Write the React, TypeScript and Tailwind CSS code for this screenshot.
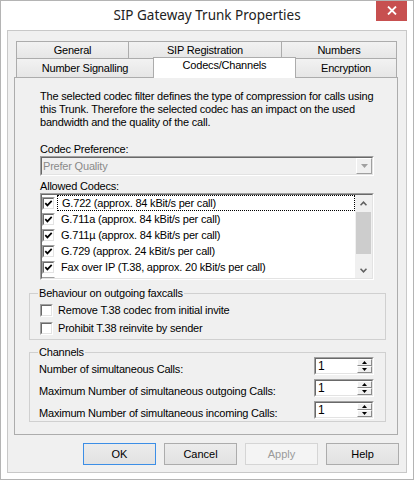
import React from "react";

// Codecs shown in the "Allowed Codecs" list (last row is cut by the list box)
const codecs = [
  "G.722 (approx. 84 kBit/s per call)",
  "G.711a (approx. 84 kBit/s per call)",
  "G.711µ (approx. 84 kBit/s per call)",
  "G.729 (approx. 24 kBit/s per call)",
  "Fax over IP (T.38, approx. 20 kBit/s per call)",
  "Forward codec information",
];

const channels = [
  "Number of simultaneous Calls:",
  "Maximum Number of simultaneous outgoing Calls:",
  "Maximum Number of simultaneous incoming Calls:",
];

const tabBase =
  "flex items-center justify-center border-[#acacac] bg-gradient-to-b from-[#f2f2f2] to-[#e6e6e6] whitespace-nowrap";

function CheckBox({ checked }: { checked?: boolean }) {
  return (
    <span className="shrink-0 w-[13px] h-[13px] border border-t-[#a0a0a0] border-l-[#a0a0a0] border-r-white border-b-white">
      <span className="flex w-full h-full items-center justify-center bg-white border border-t-[#696969] border-l-[#696969] border-r-[#e3e3e3] border-b-[#e3e3e3]">
        {checked && (
          <svg width="9" height="9" viewBox="0 0 9 9">
            <path d="M1.3 4.2 L3.4 6.4 L7.7 1.9" fill="none" stroke="#000" strokeWidth="1.7" />
          </svg>
        )}
      </span>
    </span>
  );
}

function Spinner() {
  return (
    <div className="w-[60px] h-[18px] border border-t-[#a0a0a0] border-l-[#a0a0a0] border-r-white border-b-white">
      <div className="flex h-full border border-t-[#696969] border-l-[#696969] border-r-[#e3e3e3] border-b-[#e3e3e3]">
        <div className="flex-1 bg-white pl-[2px] text-[12px] leading-[14px]">1</div>
        <div className="w-[15px] flex flex-col">
          <div className="flex-1 flex items-center justify-center bg-[#f0f0f0] border border-t-white border-l-white border-r-[#8a8a8a] border-b-[#8a8a8a]">
            <svg width="5" height="3" viewBox="0 0 5 3">
              <path d="M2.5 0 L5 3 L0 3 Z" fill="#000" />
            </svg>
          </div>
          <div className="flex-1 flex items-center justify-center bg-[#f0f0f0] border border-t-white border-l-white border-r-[#8a8a8a] border-b-[#8a8a8a]">
            <svg width="5" height="3" viewBox="0 0 5 3">
              <path d="M0 0 L5 0 L2.5 3 Z" fill="#000" />
            </svg>
          </div>
        </div>
      </div>
    </div>
  );
}

function GroupBox({ title, className, children }: { title: string; className?: string; children: React.ReactNode }) {
  return (
    <div className={`w-[357px] border border-[#d0d0d0] ${className ?? ""}`}>
      <div className="-mt-[7px] ml-[8px] w-fit px-[1px] bg-[#f0f0f0] leading-[13px]">{title}</div>
      {children}
    </div>
  );
}

export default function App() {
  return (
    <div className="relative w-[414px] h-[480px] overflow-hidden border border-[#b4b4b4] bg-white text-black text-[11px] leading-[13px] tracking-[-0.2px] font-['Liberation_Sans',Arial,sans-serif]">
      {/* Title bar */}
      <div className="h-[29px] flex items-center justify-center text-[13.5px] tracking-normal text-[#222] font-['Noto_Sans',sans-serif]">
        SIP Gateway Trunk Properties
      </div>
      <div className="absolute top-[-1px] right-[6px] w-[31px] h-[21px] bg-[#c75050] flex items-center justify-center">
        <svg width="10" height="9" viewBox="0 0 10 9">
          <path d="M1 0.5 L9 8.5 M9 0.5 L1 8.5" stroke="#fff" strokeWidth="1.8" />
        </svg>
      </div>

      {/* Client area */}
      <div className="mx-[6px] h-[443px] border border-[#c8c8c8] bg-[#f0f0f0] pt-[10px]">
        {/* Tabs */}
        <div className="ml-[8px] w-[381px]">
          <div className="flex h-[17px]">
            <div className={`${tabBase} w-[112px] border-t border-l`}>General</div>
            <div className={`${tabBase} w-[153px] border-t border-l`}>SIP Registration</div>
            <div className={`${tabBase} w-[116px] border-t border-l border-r`}>Numbers</div>
          </div>
          <div className="flex h-[19px]">
            <div className={`${tabBase} w-[137px] h-[19px] border-t border-l`}>Number Signalling</div>
            <div className="relative z-10 -mt-[1px] w-[143px] h-[21px] pb-[5px] flex items-center justify-center bg-white border-t border-l border-r border-[#acacac] whitespace-nowrap">
              Codecs/Channels
            </div>
            <div className={`${tabBase} w-[101px] h-[19px] border-t border-r`}>Encryption</div>
          </div>
        </div>

        {/* Tab page */}
        <div className="ml-[6px] w-[384px] h-[358px] border border-[#acacac] bg-[#f0f0f0] pt-[12px] pl-[14px]">
          <p className="ml-[11px] whitespace-nowrap">
            The selected codec filter defines the type of compression for calls using
            <br />
            this Trunk. Therefore the selected codec has an impact on the used
            <br />
            bandwidth and the quality of the call.
          </p>

          <div className="ml-[11px] mt-[14px]">Codec Preference:</div>
          <div className="ml-[11px] w-[334px] h-[20px] border border-t-[#a0a0a0] border-l-[#a0a0a0] border-r-white border-b-white">
            <div className="flex h-full border border-t-[#696969] border-l-[#696969] border-r-[#e3e3e3] border-b-[#e3e3e3] bg-[#f0f0f0]">
              <div className="flex-1 flex items-center pl-[1px] text-[#8a8a8a]">Prefer Quality</div>
              <div className="w-[16px] flex items-center justify-center border border-t-white border-l-white border-r-[#a0a0a0] border-b-[#a0a0a0]">
                <svg width="7" height="4" viewBox="0 0 7 4">
                  <path d="M0 0 L7 0 L3.5 4 Z" fill="#a0a0a0" />
                </svg>
              </div>
            </div>
          </div>

          <div className="ml-[11px] mt-[4px]">Allowed Codecs:</div>
          <div className="ml-[11px] w-[334px] h-[87px] border border-t-[#a0a0a0] border-l-[#a0a0a0] border-r-white border-b-white">
            <div className="flex h-full border border-t-[#696969] border-l-[#696969] border-r-[#e3e3e3] border-b-[#e3e3e3] bg-white">
              <div className="flex-1 overflow-hidden">
                {codecs.map((c, i) => (
                  <div key={c} className="flex items-center h-[16px] whitespace-nowrap">
                    <CheckBox checked />
                    <div
                      className={`flex-1 h-full flex items-center ml-[2px] pl-[4px] ${
                        i === 0 ? "border border-dotted border-black" : ""
                      }`}
                    >
                      {c}
                    </div>
                  </div>
                ))}
              </div>
              {/* Scrollbar */}
              <div className="w-[17px] flex flex-col bg-[#f0f0f0]">
                <div className="h-[17px] flex items-center justify-center">
                  <svg width="7" height="5" viewBox="0 0 7 5">
                    <path d="M0.5 4.3 L3.5 1.2 L6.5 4.3" fill="none" stroke="#606060" strokeWidth="1.6" />
                  </svg>
                </div>
                <div className="h-[42px] mx-[1px] bg-[#cdcdcd]" />
                <div className="flex-1 flex items-end justify-center pb-[5px]">
                  <svg width="7" height="5" viewBox="0 0 7 5">
                    <path d="M0.5 0.7 L3.5 3.8 L6.5 0.7" fill="none" stroke="#606060" strokeWidth="1.6" />
                  </svg>
                </div>
              </div>
            </div>
          </div>

          <GroupBox title="Behaviour on outgoing faxcalls" className="mt-[13px] pb-[2px]">
            <div className="mt-[1px] ml-[10px]">
              {["Remove T.38 codec from initial invite", "Prohibit T.38 reinvite by sender"].map((t) => (
                <div key={t} className="flex items-center gap-[5px] h-[18px]">
                  <CheckBox />
                  <span>{t}</span>
                </div>
              ))}
            </div>
          </GroupBox>

          <GroupBox title="Channels" className="mt-[12px] pb-[2px]">
            <div className="-mt-[2px] flex flex-col gap-[4px] pl-[9px] pr-[11px]">
              {channels.map((c) => (
                <div key={c} className="flex justify-between h-[18px]">
                  <span className="pt-[6px]">{c}</span>
                  <Spinner />
                </div>
              ))}
            </div>
          </GroupBox>
        </div>

        {/* Dialog buttons */}
        <div className="mt-[8px] flex justify-end gap-[8px] pr-[7px] tracking-normal">
          <button className="w-[73px] h-[22px] border border-[#3c8ee6] bg-gradient-to-b from-[#ececec] to-[#e2e2e2]">OK</button>
          <button className="w-[73px] h-[22px] border border-[#acacac] bg-gradient-to-b from-[#ececec] to-[#e2e2e2]">Cancel</button>
          <button className="w-[73px] h-[22px] border border-[#d5d5d5] bg-[#f4f4f4] text-[#9a9a9a]">Apply</button>
          <button className="w-[73px] h-[22px] border border-[#acacac] bg-gradient-to-b from-[#ececec] to-[#e2e2e2]">Help</button>
        </div>
      </div>
    </div>
  );
}
